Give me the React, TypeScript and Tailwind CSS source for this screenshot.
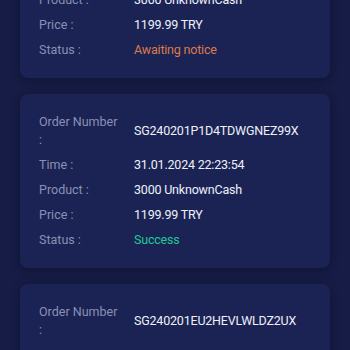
import React from "react";

type Row = { label: string; value: string; color?: string };

const cards: { rows: Row[] }[] = [
  {
    rows: [
      { label: "Order Number :", value: "SG240201XXXXXXXXXXXXX" },
      { label: "Time :", value: "31.01.2024 22:30:12" },
      { label: "Product :", value: "3000 UnknownCash" },
      { label: "Price :", value: "1199.99 TRY" },
      { label: "Status :", value: "Awaiting notice", color: "text-[#dd7a4e]" },
    ],
  },
  {
    rows: [
      { label: "Order Number :", value: "SG240201P1D4TDWGNEZ99X" },
      { label: "Time :", value: "31.01.2024 22:23:54" },
      { label: "Product :", value: "3000 UnknownCash" },
      { label: "Price :", value: "1199.99 TRY" },
      { label: "Status :", value: "Success", color: "text-[#20c997]" },
    ],
  },
  {
    rows: [
      { label: "Order Number :", value: "SG240201EU2HEVLWLDZ2UX" },
      { label: "Time :", value: "31.01.2024 22:20:07" },
      { label: "Product :", value: "3000 UnknownCash" },
      { label: "Price :", value: "1199.99 TRY" },
      { label: "Status :", value: "Success", color: "text-[#20c997]" },
    ],
  },
];

function Card({ rows }: { rows: Row[] }) {
  return (
    <div className="rounded-[8px] bg-[#1b2354] pl-[19px] pr-3 pt-[19px] pb-[19px] shadow-[0_2px_8px_rgba(8,10,30,0.45)] flex flex-col gap-[7px]">
      {rows.map((r, i) => (
        <div key={i} className="flex items-center">
          <div className="w-[84px] shrink-0 mr-[11px] text-[12.5px] leading-[18px] text-[#8a90b4]">
            {r.label}
          </div>
          <div className={`text-[12.5px] leading-[18px] tracking-[-0.2px] ${r.color ?? "text-[#eef0f8]"}`}>
            {r.value}
          </div>
        </div>
      ))}
    </div>
  );
}

export default function App() {
  return (
    <div
      className="w-[350px] h-[350px] overflow-hidden bg-[#161c45]"
      style={{ fontFamily: "Roboto, 'Noto Sans', sans-serif" }}
    >
      <div className="flex flex-col gap-[16px] pl-[20px] pr-[20px] mt-[-96px]">
        {cards.map((c, i) => (
          <Card key={i} rows={c.rows} />
        ))}
      </div>
    </div>
  );
}
